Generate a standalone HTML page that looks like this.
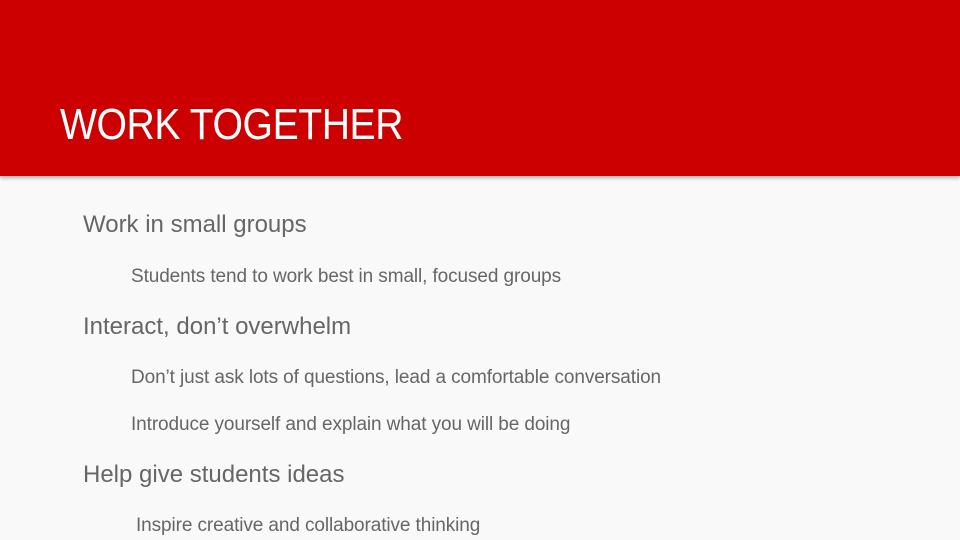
<!DOCTYPE html>
<html><head><meta charset="utf-8"><style>
body{margin:0;width:960px;height:540px;overflow:hidden;background:#f9f9f9;font-family:"Liberation Sans",sans-serif;position:relative}
.bar{position:absolute;left:0;top:0;width:960px;height:176px;background:#cc0000;box-shadow:0 2px 4px rgba(0,0,0,0.3)}
.t{position:absolute;white-space:nowrap;line-height:1}
.title{left:60px;top:103px;font-size:44px;color:#fff;letter-spacing:-0.5px;transform:scaleX(0.89);transform-origin:left top}
.h{left:83px;font-size:24px;color:#666}
.s{left:131px;font-size:19px;color:#666;letter-spacing:-0.1px}
</style></head><body>
<div class="bar"></div>
<div class="t title">WORK TOGETHER</div>
<div class="t h" style="top:213px">Work in small groups</div>
<div class="t s" style="top:267px">Students tend to work best in small, focused groups</div>
<div class="t h" style="top:315px">Interact, don’t overwhelm</div>
<div class="t s" style="top:368px">Don’t just ask lots of questions, lead a comfortable conversation</div>
<div class="t s" style="top:415px">Introduce yourself and explain what you will be doing</div>
<div class="t h" style="top:463px">Help give students ideas</div>
<div class="t s" style="top:516px;left:136px">Inspire creative and collaborative thinking</div>
</body></html>
